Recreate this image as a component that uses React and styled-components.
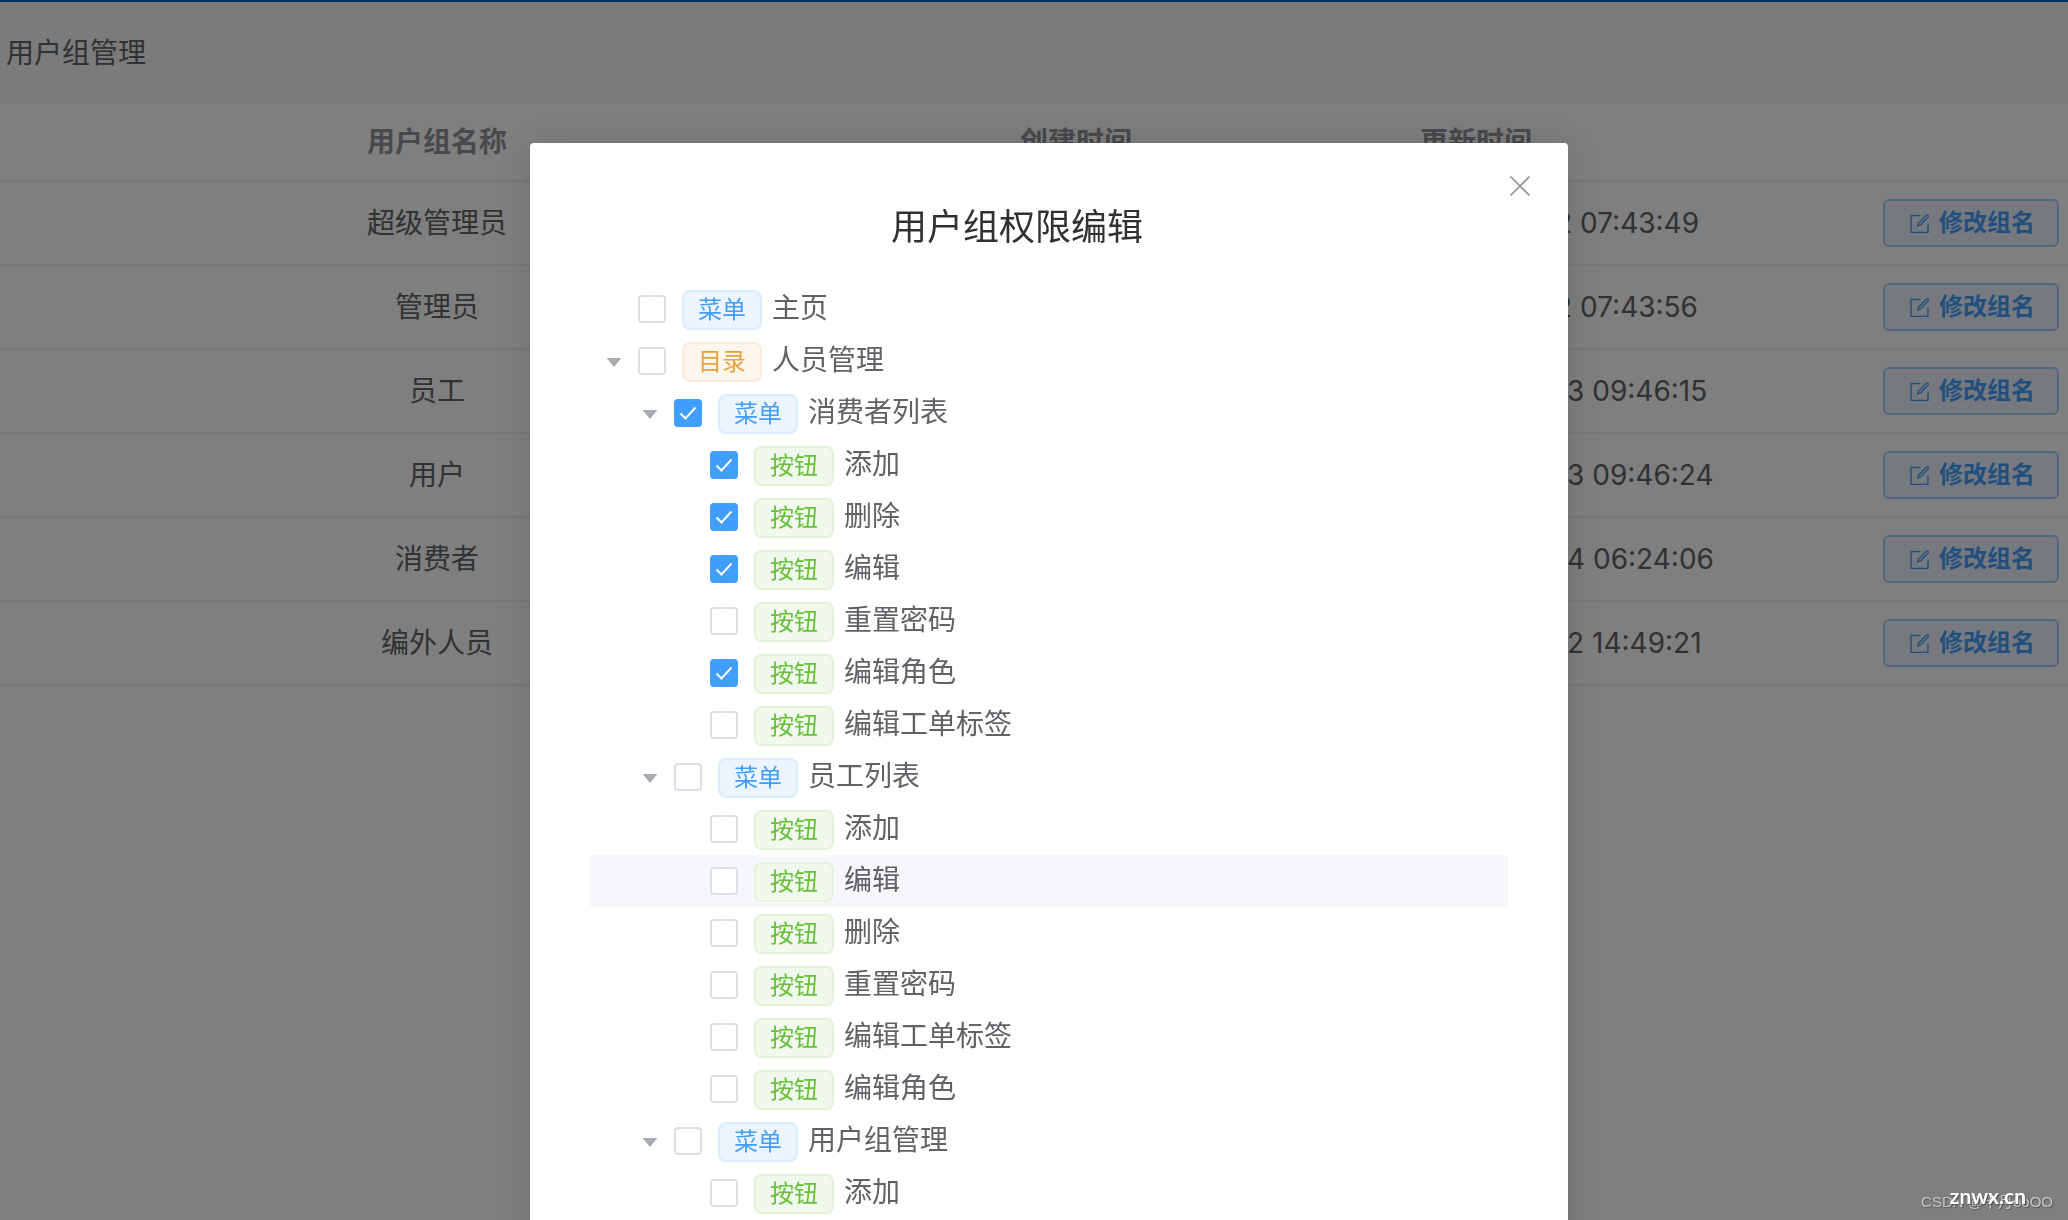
import React, { useState } from 'react';
import styled, { createGlobalStyle, css } from 'styled-components';

const colors = {
  text: '#606266',
  title: '#303133',
  muted: '#909399',
  border: '#ebeef5',
  primary: '#409eff',
};

const GlobalStyle = createGlobalStyle`
  * {
    box-sizing: border-box;
  }

  body {
    margin: 0;
    background: #fff;
    color: ${colors.text};
    font-family: Inter, 'Noto Sans CJK SC', sans-serif;
    font-size: 28px;
  }

  button {
    font-family: inherit;
    cursor: pointer;
  }
`;

const Page = styled.main`
  min-height: 100vh;
  border-top: 2px solid #0060b8;
`;

const PageHeader = styled.header`
  padding: 31px 6px 30px;
  background: #f6f6f6;
`;

const PageTitle = styled.h1`
  margin: 0;
  font-size: 28px;
  font-weight: 400;
  line-height: 40px;
`;

const GroupTable = styled.table`
  width: 100%;
  table-layout: fixed;
  border-collapse: separate;
  border-spacing: 0;

  th,
  td {
    height: 84px;
    padding: 0 0 0 20px;
    border-bottom: 2px solid ${colors.border};
    text-align: left;
    line-height: 40px;
  }

  th {
    height: 79px;
    color: ${colors.muted};
    font-weight: 700;
  }

  th:first-child,
  td:first-child {
    padding: 0 126px 0 0;
    text-align: center;
  }

  td:last-child {
    padding: 0 9px 0 0;
    text-align: right;
  }
`;

const TimeCol = styled.col`
  width: 400px;
`;

const ActionCol = styled.col`
  width: 268px;
`;

const RenameButton = styled.button`
  display: inline-flex;
  align-items: center;
  gap: 10px;
  height: 48px;
  padding: 0 22px 0 24px;
  border: 2px solid #9fceff;
  border-radius: 6px;
  background: #ecf5ff;
  color: ${colors.primary};
  font-size: 24px;
  font-weight: 700;
  line-height: 36px;
  vertical-align: middle;
`;

const Overlay = styled.div`
  position: fixed;
  inset: 0;
  padding: 143px 500px 0 530px;
  overflow-y: auto;
  scrollbar-width: none;
  background: rgba(0, 0, 0, 0.5);
`;

const Dialog = styled.section`
  border-radius: 4px;
  background: #fff;
  box-shadow: 0 2px 40px rgba(0, 0, 0, 0.15);
`;

const DialogHeader = styled.header`
  display: flex;
  align-items: flex-start;
  padding: 31px 36px 0 60px;
`;

const DialogTitle = styled.h2`
  flex: 1;
  margin: 29px 64px 0 0;
  color: ${colors.title};
  font-size: 36px;
  font-weight: 400;
  line-height: 48px;
  text-align: center;
`;

const CloseButton = styled.button`
  display: flex;
  padding: 0;
  border: 0;
  background: none;
  color: ${colors.muted};
`;

const Tree = styled.ul`
  margin: 0;
  padding: 32px 60px 60px;
  list-style: none;
`;

const TreeRow = styled.li`
  display: flex;
  align-items: center;
  height: 52px;
  padding-left: ${({ $level }) => $level * 36}px;
  background: ${({ $active }) => ($active ? '#f5f7fa' : 'transparent')};
`;

const Toggle = styled.button`
  display: flex;
  align-items: center;
  justify-content: center;
  width: 48px;
  height: 52px;
  padding: 0;
  border: 0;
  background: none;
  color: #a8abb2;
`;

const ToggleSpace = styled.span`
  width: 48px;
`;

const NodeLabel = styled.label`
  display: flex;
  align-items: center;
  cursor: pointer;
`;

const Checkbox = styled.input`
  appearance: none;
  width: 28px;
  height: 28px;
  margin: 0 16px 0 0;
  border: 2px solid #dcdfe6;
  border-radius: 4px;
  background: #fff;

  &:checked {
    border-color: ${colors.primary};
    background: ${colors.primary}
      url("data:image/svg+xml,%3Csvg xmlns='http://www.w3.org/2000/svg' viewBox='0 0 24 24'%3E%3Cpath d='M4.5 12.5l5 5L19.500 6.500' fill='none' stroke='white' stroke-width='2'/%3E%3C/svg%3E")
      center / 24px no-repeat;
  }
`;

const tagTypes = {
  菜单: css`
    border-color: #d9ecff;
    background: #ecf5ff;
    color: #409eff;
  `,
  目录: css`
    border-color: #faecd8;
    background: #fdf6ec;
    color: #e6a23c;
  `,
  按钮: css`
    border-color: #e1f3d8;
    background: #f0f9eb;
    color: #67c23a;
  `,
};

const Tag = styled.span`
  height: 40px;
  margin: 2px 10px 0 0;
  padding: 0 14px;
  border: 2px solid;
  border-radius: 8px;
  font-size: 24px;
  line-height: 36px;
  ${({ $type }) => tagTypes[$type]}
`;

const NodeName = styled.span`
  padding-bottom: 2px;
  line-height: 40px;
`;

const Watermark = styled.div`
  position: fixed;
  right: 15px;
  bottom: 8px;
  color: #c8c8c8;
  font-family: 'Liberation Sans', 'Noto Sans CJK SC', sans-serif;
  font-size: 15px;
  line-height: 20px;
  text-shadow: 1px 1px 1px #555;
`;

const SiteMark = styled(Watermark)`
  right: 42px;
  bottom: 12px;
  color: #fff;
  font-family: Lato, sans-serif;
  font-size: 21px;
  font-weight: 700;
  line-height: 24px;
`;

const EditIcon = () => (
  <svg width="20" height="20" viewBox="-1 -1 20 20" fill="none" stroke="currentColor" strokeWidth="1.4">
    <path d="M10.500 1.500H1v17h17V9.500" />
    <path d="M7.800 12l.5-2.600 8-8.200a1.200 1.200 0 0 1 1.800 1.800l-8 8.200z" />
  </svg>
);

const CloseIcon = () => (
  <svg width="24" height="24" viewBox="0 0 24 24" fill="none" stroke="currentColor" strokeWidth="1.6">
    <path d="M2.500 2.500l19 19M21.500 2.500l-19 19" />
  </svg>
);

const CaretIcon = () => (
  <svg width="16" height="16" viewBox="0 0 16 16" fill="currentColor">
    <path d="M.5 5h15L8 14z" />
  </svg>
);

const groups = [
  { name: '超级管理员', updated: '2022-11-02 07:43:49' },
  { name: '管理员', updated: '2022-11-02 07:43:56' },
  { name: '员工', updated: '2022-02-03 09:46:15' },
  { name: '用户', updated: '2022-02-03 09:46:24' },
  { name: '消费者', updated: '2022-02-04 06:24:06' },
  { name: '编外人员', updated: '2022-02-02 14:49:21' },
];

const nodes = [
  { level: 0, type: '菜单', name: '主页' },
  { level: 0, type: '目录', name: '人员管理', parent: true },
  { level: 1, type: '菜单', name: '消费者列表', parent: true, checked: true },
  { level: 2, type: '按钮', name: '添加', checked: true },
  { level: 2, type: '按钮', name: '删除', checked: true },
  { level: 2, type: '按钮', name: '编辑', checked: true },
  { level: 2, type: '按钮', name: '重置密码' },
  { level: 2, type: '按钮', name: '编辑角色', checked: true },
  { level: 2, type: '按钮', name: '编辑工单标签' },
  { level: 1, type: '菜单', name: '员工列表', parent: true },
  { level: 2, type: '按钮', name: '添加' },
  { level: 2, type: '按钮', name: '编辑' },
  { level: 2, type: '按钮', name: '删除' },
  { level: 2, type: '按钮', name: '重置密码' },
  { level: 2, type: '按钮', name: '编辑工单标签' },
  { level: 2, type: '按钮', name: '编辑角色' },
  { level: 1, type: '菜单', name: '用户组管理', parent: true },
  { level: 2, type: '按钮', name: '添加' },
];

const App = () => {
  const [checked, setChecked] = useState(nodes.map((node) => Boolean(node.checked)));
  const [active, setActive] = useState(11);

  const toggleChecked = (index) => {
    setChecked(checked.map((value, i) => (i === index ? !value : value)));
  };

  return (
    <>
      <GlobalStyle />
      <Page>
        <PageHeader>
          <PageTitle>用户组管理</PageTitle>
        </PageHeader>
        <GroupTable>
          <colgroup>
            <col />
            <TimeCol />
            <TimeCol />
            <ActionCol />
          </colgroup>
          <thead>
            <tr>
              <th>用户组名称</th>
              <th>创建时间</th>
              <th>更新时间</th>
              <th />
            </tr>
          </thead>
          <tbody>
            {groups.map(({ name, created, updated }) => (
              <tr key={name}>
                <td>{name}</td>
                <td>{created}</td>
                <td>{updated}</td>
                <td>
                  <RenameButton type="button">
                    <EditIcon />
                    <span>修改组名</span>
                  </RenameButton>
                </td>
              </tr>
            ))}
          </tbody>
        </GroupTable>
      </Page>

      <Overlay>
        <Dialog role="dialog" aria-labelledby="dialog-title">
          <DialogHeader>
            <DialogTitle id="dialog-title">用户组权限编辑</DialogTitle>
            <CloseButton type="button" aria-label="关闭">
              <CloseIcon />
            </CloseButton>
          </DialogHeader>
          <Tree>
            {nodes.map((node, index) => (
              <TreeRow
                key={index}
                $level={node.level}
                $active={index === active}
                onMouseEnter={() => setActive(index)}
              >
                {node.parent ? (
                  <Toggle type="button" aria-label="收起">
                    <CaretIcon />
                  </Toggle>
                ) : (
                  <ToggleSpace />
                )}
                <NodeLabel>
                  <Checkbox
                    type="checkbox"
                    checked={checked[index]}
                    onChange={() => toggleChecked(index)}
                  />
                  <Tag $type={node.type}>{node.type}</Tag>
                  <NodeName>{node.name}</NodeName>
                </NodeLabel>
              </TreeRow>
            ))}
          </Tree>
        </Dialog>
      </Overlay>

      <Watermark>CSDN @十月ooOO</Watermark>
      <SiteMark>znwx.cn</SiteMark>
    </>
  );
};

export default App;
